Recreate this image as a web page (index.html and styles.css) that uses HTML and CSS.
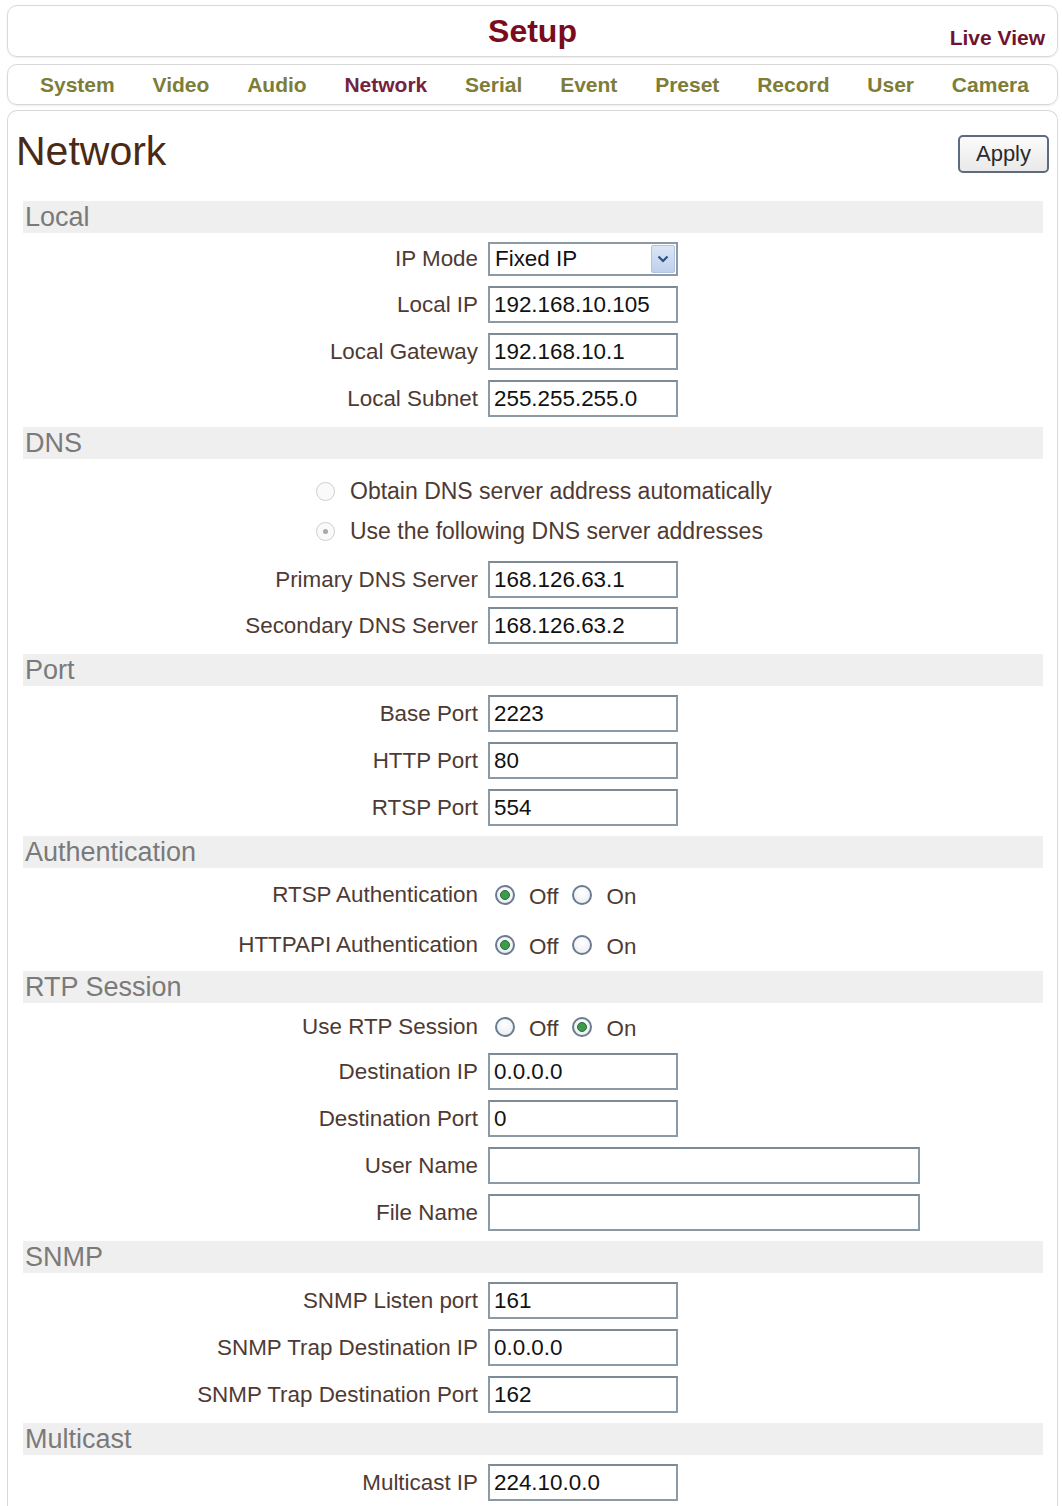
FILE: index.html
```html
<!DOCTYPE html>
<html lang="en">
<head>
    <meta charset="UTF-8">
    <title>Setup - Network</title>
    <meta name="viewport" content="width=device-width, initial-scale=1.0">
    <link rel="stylesheet" href="styles.css">
</head>
<body>

<!-- Top bar -->
<div class="topbar">
    <span></span>
    <span class="title">Setup</span>
    <a class="live" href="#">Live View</a>
</div>

<!-- Setup menu -->
<nav class="tabs">
    <a href="#">System</a>
    <a href="#">Video</a>
    <a href="#">Audio</a>
    <a href="#" class="active">Network</a>
    <a href="#">Serial</a>
    <a href="#">Event</a>
    <a href="#">Preset</a>
    <a href="#">Record</a>
    <a href="#">User</a>
    <a href="#">Camera</a>
</nav>

<!-- Main panel -->
<div class="panel">
    <div class="panel-head">
        <h1>Network</h1>
        <button type="button" class="apply">Apply</button>
    </div>

    <div class="section">
        <div class="bar">Local</div>
        <div class="rows">
            <div class="row">
                <label>IP Mode</label>
                <div class="select">
                    <span>Fixed IP</span>
                    <span class="arrow">
                        <svg width="12" height="8" viewBox="0 0 12 8"><path d="M1.5 1.5 L6 6 L10.5 1.5" fill="none" stroke="#2e4f86" stroke-width="2.2"/></svg>
                    </span>
                </div>
            </div>
            <div class="row"><label>Local IP</label><input type="text" value="192.168.10.105"></div>
            <div class="row"><label>Local Gateway</label><input type="text" value="192.168.10.1"></div>
            <div class="row"><label>Local Subnet</label><input type="text" value="255.255.255.0"></div>
        </div>
    </div>

    <div class="section">
        <div class="bar">DNS</div>
        <div class="rows dns">
            <div class="choice"><span class="radio off"></span>Obtain DNS server address automatically</div>
            <div class="choice"><span class="radio off checked"></span>Use the following DNS server addresses</div>
            <div class="row"><label>Primary DNS Server</label><input type="text" value="168.126.63.1"></div>
            <div class="row"><label>Secondary DNS Server</label><input type="text" value="168.126.63.2"></div>
        </div>
    </div>

    <div class="section">
        <div class="bar">Port</div>
        <div class="rows">
            <div class="row"><label>Base Port</label><input type="text" value="2223"></div>
            <div class="row"><label>HTTP Port</label><input type="text" value="80"></div>
            <div class="row"><label>RTSP Port</label><input type="text" value="554"></div>
        </div>
    </div>

    <div class="section">
        <div class="bar">Authentication</div>
        <div class="rows auth">
            <div class="row switch">
                <label>RTSP Authentication</label>
                <span class="radio checked"></span><span class="opt">Off</span>
                <span class="radio"></span><span class="opt">On</span>
            </div>
            <div class="row switch">
                <label>HTTPAPI Authentication</label>
                <span class="radio checked"></span><span class="opt">Off</span>
                <span class="radio"></span><span class="opt">On</span>
            </div>
        </div>
    </div>

    <div class="section">
        <div class="bar">RTP Session</div>
        <div class="rows rtp">
            <div class="row switch">
                <label>Use RTP Session</label>
                <span class="radio"></span><span class="opt">Off</span>
                <span class="radio checked"></span><span class="opt">On</span>
            </div>
            <div class="row"><label>Destination IP</label><input type="text" value="0.0.0.0"></div>
            <div class="row"><label>Destination Port</label><input type="text" value="0"></div>
            <div class="row"><label>User Name</label><input type="text" class="wide" value=""></div>
            <div class="row"><label>File Name</label><input type="text" class="wide" value=""></div>
        </div>
    </div>

    <div class="section">
        <div class="bar">SNMP</div>
        <div class="rows">
            <div class="row"><label>SNMP Listen port</label><input type="text" value="161"></div>
            <div class="row"><label>SNMP Trap Destination IP</label><input type="text" value="0.0.0.0"></div>
            <div class="row"><label>SNMP Trap Destination Port</label><input type="text" value="162"></div>
        </div>
    </div>

    <div class="section">
        <div class="bar">Multicast</div>
        <div class="rows">
            <div class="row"><label>Multicast IP</label><input type="text" value="224.10.0.0"></div>
        </div>
    </div>
</div>

</body>
</html>
```

FILE: styles.css
```css
* {
    box-sizing: border-box;
}

body {
    font-family: "Liberation Sans", Arial, sans-serif;
    background-color: #ffffff;
    margin: 0;
    padding: 5px 4px 0 7px;
    color: #4e3a33;
    overflow: hidden;
}

/* Top bar */
.topbar {
    height: 52px;
    border: 1px solid #d8d8d8;
    border-radius: 10px;
    box-shadow: 0 1px 2px rgba(0,0,0,0.08);
    display: grid;
    grid-template-columns: 1fr auto 1fr;
    align-items: center;
    padding: 0 12px 0 12px;
}

.topbar .title {
    font-size: 32px;
    font-weight: bold;
    color: #7a0c1c;
    line-height: 36px;
}

.topbar .live {
    justify-self: end;
    align-self: end;
    padding-bottom: 6px;
    font-size: 21px;
    font-weight: bold;
    color: #6e1432;
    text-decoration: none;
    line-height: 24px;
}

/* Menu */
.tabs {
    margin-top: 7px;
    height: 41px;
    border: 1px solid #d8d8d8;
    border-radius: 10px;
    box-shadow: 0 1px 2px rgba(0,0,0,0.08);
    display: flex;
    align-items: center;
    justify-content: space-between;
    padding: 0 28px 0 32px;
}

.tabs a {
    font-size: 21px;
    font-weight: bold;
    color: #7d7d38;
    text-decoration: none;
}

.tabs a.active {
    color: #742240;
}

/* Panel */
.panel {
    margin-top: 5px;
    border: 1px solid #d8d8d8;
    border-bottom: none;
    border-radius: 10px 10px 0 0;
    padding: 0 0 40px 0;
}

.panel-head {
    display: flex;
    justify-content: space-between;
    align-items: flex-start;
    padding: 16px 8px 26px 8px;
}

.panel-head h1 {
    margin: 0;
    font-size: 41px;
    font-weight: normal;
    line-height: 48px;
    color: #4a2a14;
}

.apply {
    margin-top: 8px;
    width: 91px;
    height: 38px;
    font-family: "Liberation Sans", Arial, sans-serif;
    font-size: 22px;
    color: #2a2a2a;
    background: linear-gradient(#fbfbfb, #e9e9e9);
    border: 2px solid #5d6b7e;
    border-radius: 5px;
    padding: 0;
}

.section {
    margin: 0 14px 0 15px;
}

.bar {
    height: 32px;
    line-height: 32px;
    background-color: #efefef;
    color: #7a7a7a;
    font-size: 27px;
    padding-left: 2px;
}

.rows {
    display: flex;
    flex-direction: column;
    gap: 10px;
    padding: 9px 0 10px 0;
}

.row {
    display: flex;
    align-items: center;
    height: 37px;
    font-size: 22.4px;
}

.row label {
    width: 455px;
    text-align: right;
    margin-right: 10px;
}

input[type="text"] {
    width: 190px;
    height: 37px;
    border: 2px solid #8c9aa6;
    border-top-color: #7c8a96;
    font-family: "Liberation Sans", Arial, sans-serif;
    font-size: 22.4px;
    color: #111;
    padding: 0 4px;
    background: #fff;
}

input.wide {
    width: 432px;
}

.row:has(.select) {
    height: 34px;
}

.select {
    width: 190px;
    height: 34px;
    border: 2px solid #8c9aa6;
    display: flex;
    align-items: center;
    justify-content: space-between;
    font-size: 22.4px;
    color: #111;
    padding: 0 1px 0 5px;
}

.select .arrow {
    width: 24px;
    height: 28px;
    background: linear-gradient(#dbe6f6, #bfd0ec);
    border: 1px solid #b3c4df;
    border-radius: 2px;
    display: flex;
    align-items: center;
    justify-content: center;
}

/* DNS choices */
.dns {
    gap: 0;
    padding-top: 12px;
}

.dns .choice {
    height: 40px;
    display: flex;
    align-items: center;
    padding-left: 293px;
    font-size: 23px;
}

.dns .choice .radio {
    margin-right: 15px;
}

.dns .row {
    margin-top: 10px;
}

.dns .row + .row {
    margin-top: 9px;
}

/* Radios */
.radio {
    width: 20px;
    height: 20px;
    border-radius: 50%;
    border: 2px solid #6b7b90;
    background: radial-gradient(circle at 50% 35%, #ffffff, #e6e9ee);
    display: inline-flex;
    align-items: center;
    justify-content: center;
    flex: none;
}

.radio.checked::after {
    content: "";
    width: 8px;
    height: 8px;
    border-radius: 50%;
    background: #3d9b4c;
    border: 1px solid #2a6a34;
}

.radio.off {
    width: 19px;
    height: 19px;
    border: 1px solid #cfcfcf;
    background: #fafafa;
}

.radio.off.checked::after {
    width: 5px;
    height: 5px;
    background: #a8a8a8;
    border: none;
}

.switch .radio {
    margin-left: 7px;
    margin-right: 14px;
}

.switch .opt + .radio {
    margin-left: 14px;
}

.opt {
    margin-top: 4px;
}

.auth {
    gap: 0;
    padding: 2px 0 1px 0;
}

.auth .row {
    height: 50px;
}

.rtp {
    padding-top: 4px;
}

.rtp .row.switch {
    height: 40px;
    margin-bottom: -4px;
}
```
